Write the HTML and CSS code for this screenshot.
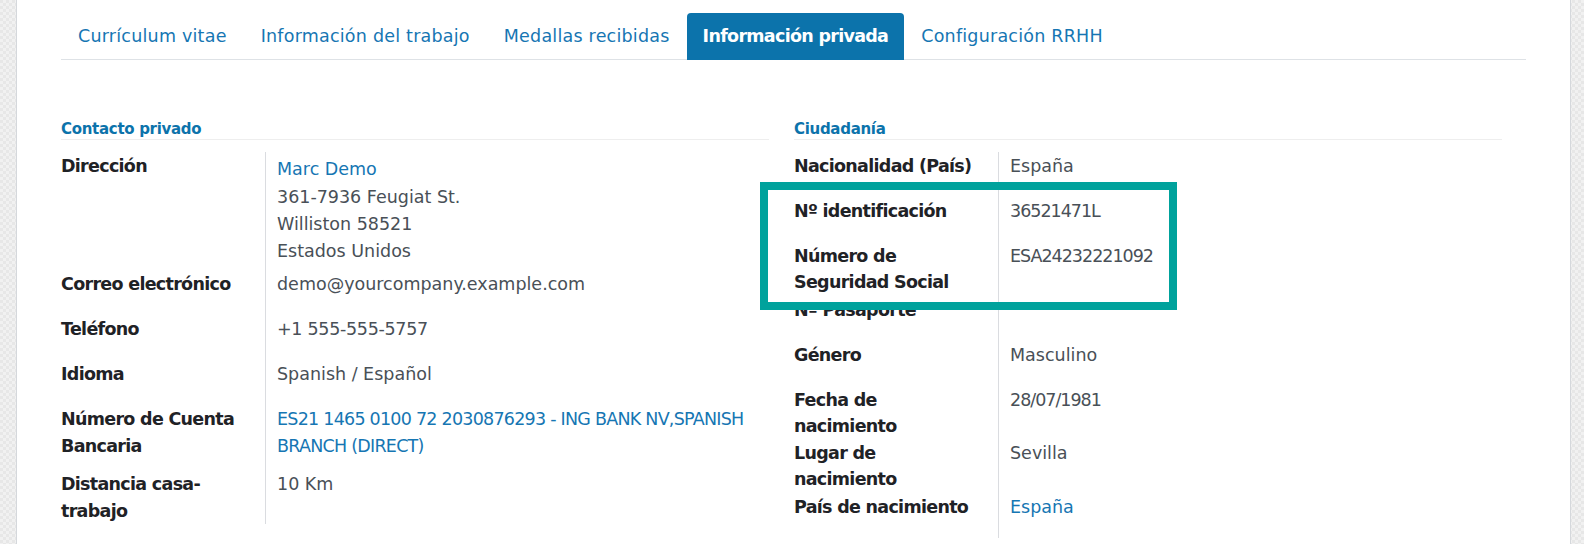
FILE: index.html
```html
<!DOCTYPE html>
<html lang="es">
<head>
<meta charset="utf-8">
<title>Información privada</title>
<link rel="stylesheet" href="styles.css">
</head>
<body>
<div class="sheet">
  <nav class="tabs">
    <a class="tab">Currículum vitae</a>
    <a class="tab">Información del trabajo</a>
    <a class="tab">Medallas recibidas</a>
    <a class="tab tab-active">Información privada</a>
    <a class="tab">Configuración RRHH</a>
  </nav>
  <div class="groups">
    <section class="group">
      <div class="group-title">Contacto privado</div>
      <div class="row">
        <div class="label">Dirección</div>
        <div class="value value-address">
          <div class="link link-name">Marc Demo</div>
          <div class="address">361-7936 Feugiat St.<br>Williston 58521<br>Estados Unidos</div>
        </div>
      </div>
      <div class="row">
        <div class="label">Correo electrónico</div>
        <div class="value">demo@yourcompany.example.com</div>
      </div>
      <div class="row">
        <div class="label">Teléfono</div>
        <div class="value num-phone">+1 555-555-5757</div>
      </div>
      <div class="row">
        <div class="label">Idioma</div>
        <div class="value">Spanish / Español</div>
      </div>
      <div class="row">
        <div class="label">Número de Cuenta<br>Bancaria</div>
        <div class="value"><span class="link bank">ES21 1465 0100 72 2030876293 - ING BANK NV,SPANISH<br>BRANCH (DIRECT)</span></div>
      </div>
      <div class="row">
        <div class="label">Distancia casa-<br>trabajo</div>
        <div class="value">10 Km</div>
      </div>
    </section>
    <section class="group">
      <div class="group-title">Ciudadanía</div>
      <div class="row">
        <div class="label">Nacionalidad (País)</div>
        <div class="value">España</div>
      </div>
      <div class="row">
        <div class="label">Nº identificación</div>
        <div class="value num">36521471L</div>
      </div>
      <div class="row">
        <div class="label">Número de<br>Seguridad Social</div>
        <div class="value num">ESA24232221092</div>
      </div>
      <div class="row">
        <div class="label">Nº Pasaporte</div>
        <div class="value"></div>
      </div>
      <div class="row">
        <div class="label">Género</div>
        <div class="value">Masculino</div>
      </div>
      <div class="row">
        <div class="label">Fecha de<br>nacimiento</div>
        <div class="value num">28/07/1981</div>
      </div>
      <div class="row">
        <div class="label">Lugar de<br>nacimiento</div>
        <div class="value">Sevilla</div>
      </div>
      <div class="row">
        <div class="label">País de nacimiento</div>
        <div class="value"><span class="link">España</span></div>
      </div>
    </section>
  </div>
</div>
<div class="highlight"></div>
</body>
</html>
```
FILE: styles.css
```css
html, body {
  margin: 0;
  height: 544px;
  overflow: hidden;
}
body {
  background: repeating-conic-gradient(#f1f1f1 0 25%, #e7e7e7 0 50%) 0 0 / 6px 6px;
  font-family: "DejaVu Sans", "Noto Sans", sans-serif;
  font-size: 17.5px;
  line-height: 26.25px;
  color: #495057;
}
.sheet {
  box-sizing: border-box;
  margin: 0 13px 0 16px;
  min-height: 544px;
  padding: 13px 44px 0 44px;
  background: #fff;
  border-left: 1px solid #d5d8dc;
  border-right: 1px solid #d5d8dc;
}
.tabs {
  display: flex;
  height: 46px;
  border-bottom: 1px solid #dee2e6;
}
.tab {
  display: block;
  padding: 1px 17px 0;
  line-height: 45px;
  color: #1676b3;
  letter-spacing: 0.22px;
  white-space: nowrap;
}
.tab-active {
  padding: 1px 16px 0;
  height: 46px;
  background: #0c73ab;
  color: #fff;
  font-weight: bold;
  letter-spacing: -0.7px;
  border-radius: 4px 4px 0 0;
}
.groups {
  display: grid;
  grid-template-columns: 708px 708px;
  column-gap: 25px;
  margin-top: 56px;
}
.group-title {
  padding-top: 4px;
  font-size: 15px;
  line-height: 19px;
  font-weight: bold;
  letter-spacing: -0.3px;
  color: #0c73ab;
  border-bottom: 1px solid #eeeeee;
  margin-bottom: 12px;
}
.row {
  display: flex;
  min-height: 45px;
}
.label {
  flex: none;
  width: 204px;
  padding-top: 1px;
  font-weight: bold;
  letter-spacing: -0.7px;
  color: #1f2226;
  white-space: nowrap;
}
.value {
  flex: 1;
  border-left: 1px solid #dadce0;
  padding: 1px 0 11.5px 11px;
}
.value-address {
  padding-bottom: 5px;
}
.num {
  letter-spacing: -1px;
}
.num-phone {
  letter-spacing: -0.3px;
}
.link {
  color: #1676b3;
}
.bank {
  letter-spacing: -0.75px;
  white-space: nowrap;
}
.link-name {
  padding-top: 3px;
}
.address {
  margin-top: 2px;
  line-height: 27px;
}
.highlight {
  position: absolute;
  left: 760px;
  top: 182px;
  width: 417px;
  height: 128px;
  box-sizing: border-box;
  border: 8px solid #00a29c;
}
```
